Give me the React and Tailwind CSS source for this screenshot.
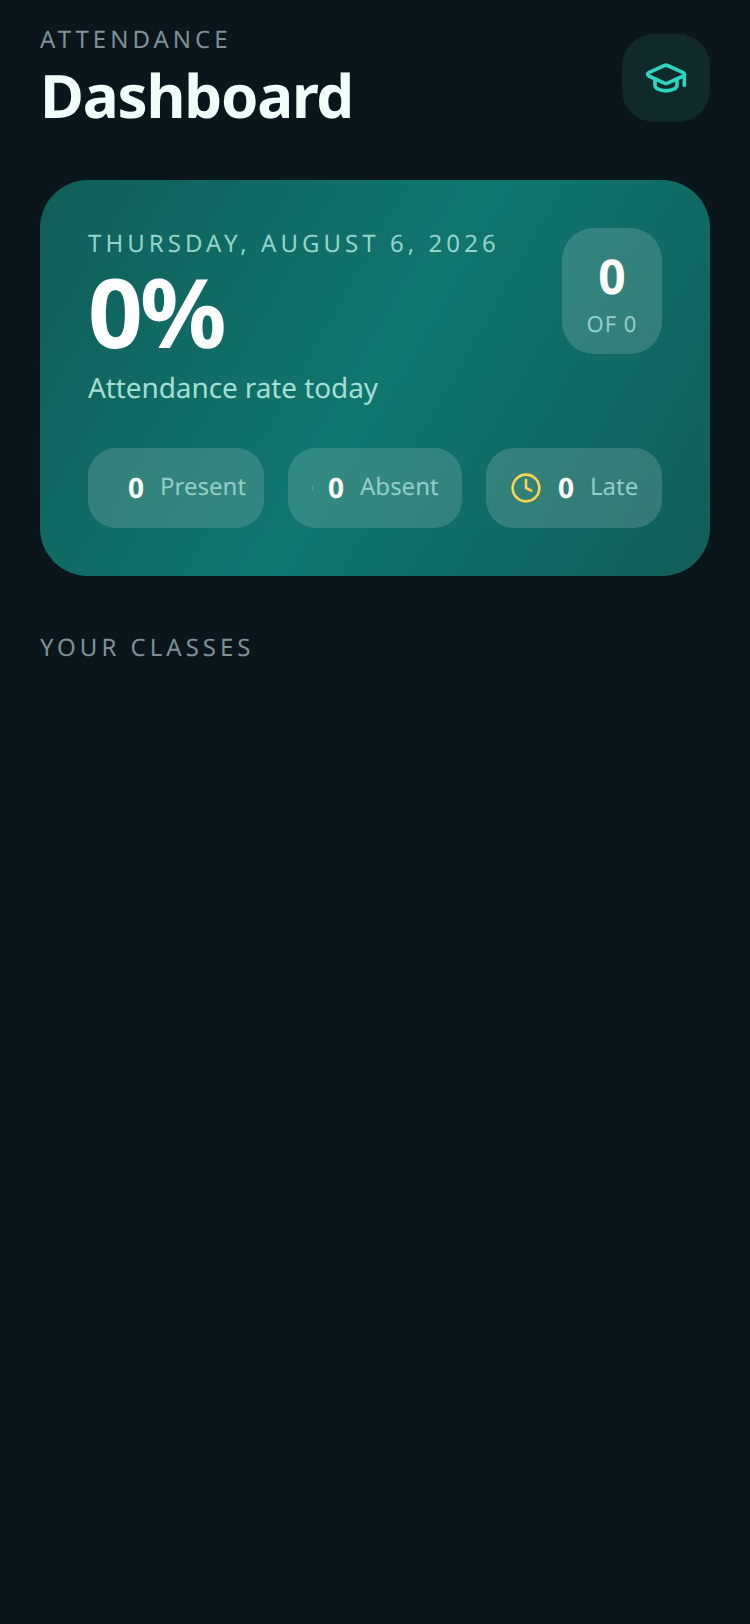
import React from 'react';
import { Clock, GraduationCap } from 'lucide-react';

const stats = [
  { label: 'Present', value: 0, width: 'w-[176px]' },
  { label: 'Absent', value: 0, width: 'w-[174px]', dot: true },
  { label: 'Late', value: 0, width: 'w-[176px]', clock: true },
];

const StatPill = ({ label, value, width, dot, clock }) => (
  <div className={`${width} shrink-0 h-20 flex items-center gap-4 pl-6 rounded-[28px] bg-white/15`}>
    {clock ? (
      <Clock size={32} strokeWidth={2} className="shrink-0 text-[#fcd34d]" />
    ) : (
      <span className="w-0 flex items-center">
        {dot && <span className="w-px h-1 shrink-0 bg-[#2dd4bf]/60" />}
      </span>
    )}
    <span className="text-[28px] leading-none font-bold text-white">{value}</span>
    <span className="-mt-0.5 text-[24px] leading-none text-[#93cfc4]">{label}</span>
  </div>
);

const App = () => {
  return (
    <div className="min-h-[1624px] bg-[#0b161c] px-10 pt-[21px] font-['Noto_Sans','Open_Sans',sans-serif] [text-rendering:geometricPrecision]">
      <header className="flex justify-between items-start">
        <div>
          <p className="pt-px text-[24px] leading-[36px] tracking-[4px] text-[#7d9196]">ATTENDANCE</p>
          <h1 className="mt-px text-[60px] leading-[72px] font-bold tracking-[-1.2px] text-[#f0fdfa]">Dashboard</h1>
        </div>
        <div className="mt-[13px] w-[88px] h-[88px] flex items-center justify-center rounded-[32px] bg-[#10292a]">
          <GraduationCap size={44} strokeWidth={2} className="text-[#2dd4bf]" />
        </div>
      </header>

      <section className="mt-[49px] h-[396px] p-12 rounded-[48px] bg-[linear-gradient(120deg,#115e59,#0f766e,#115e59)]">
        <div className="flex justify-between items-start">
          <div>
            <p className="pt-px text-[24px] leading-[30px] tracking-[4.05px] text-[#93d5ca]">THURSDAY, AUGUST 6, 2026</p>
            <p className="mt-[5px] text-[96px] leading-[96px] font-bold tracking-[-3px] text-white">0%</p>
            <p className="mt-[7px] text-[28px] leading-[42px] tracking-[-0.1px] text-[#a3dfd4]">Attendance rate today</p>
          </div>
          <div className="w-[100px] h-[126px] flex flex-col items-center justify-center rounded-[32px] bg-white/15">
            <span className="mt-[6px] text-[48px] leading-[56px] font-bold text-white">0</span>
            <span className="mt-1 text-[22px] leading-[30px] tracking-[1px] text-[#93cfc4]">OF 0</span>
          </div>
        </div>
        <div className="mt-[39px] flex gap-6">
          {stats.map((stat) => (
            <StatPill key={stat.label} {...stat} />
          ))}
        </div>
      </section>

      <h2 className="mt-[58px] text-[24px] leading-[28px] tracking-[4px] text-[#7d9196]">YOUR CLASSES</h2>
    </div>
  );
};

export default App;
